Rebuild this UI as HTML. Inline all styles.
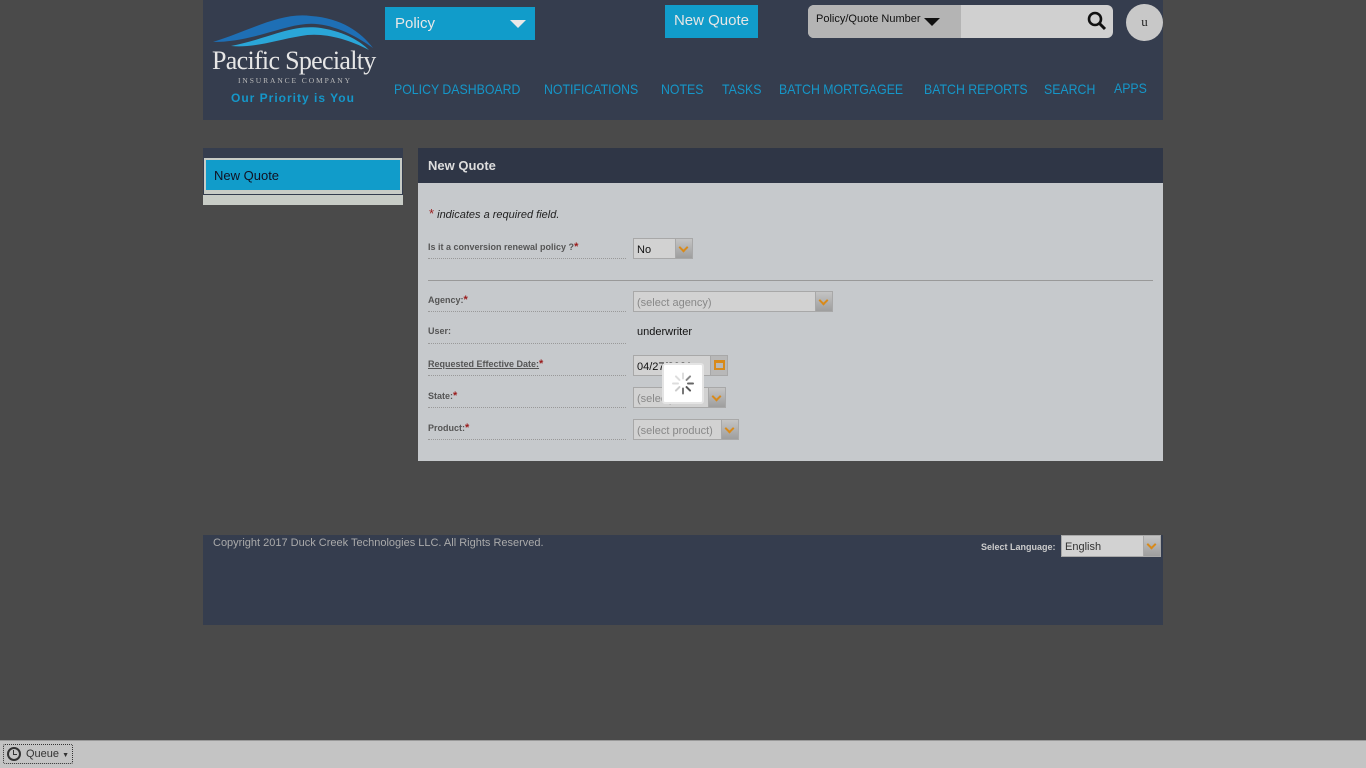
<!DOCTYPE html>
<html><head><meta charset="utf-8"><style>
*{box-sizing:border-box;margin:0;padding:0}
body{width:1366px;height:768px;background:#4a4a4a;font-family:"Liberation Sans",sans-serif;position:relative;overflow:hidden}
.abs{position:absolute}
#hdr{left:203px;top:0;width:960px;height:120px;background:#353d4e}
.nav{position:absolute;top:81px;color:#1597c9;font-size:14px;white-space:nowrap;transform:scaleX(0.88);transform-origin:0 0}
.sel{position:absolute;background:#d2d2d2;border:1px solid #a8a8a8;font-size:11px;color:#888;padding-left:3px;line-height:20px;height:21px}
.sel .b{position:absolute;right:0;top:0;width:17px;height:19px;background:linear-gradient(#c4c4c4,#9e9e9e);border-left:1px solid #a8a8a8}
.sel .b:after{content:"";position:absolute;left:4px;top:5px;width:5px;height:5px;border-right:2px solid #d88a1a;border-bottom:2px solid #d88a1a;transform:rotate(45deg)}
.lbl{position:absolute;left:428px;width:198px;font-size:9px;font-weight:bold;color:#555;border-bottom:1px dotted #999;height:18px}
.lbl i{color:#9a1b1b;font-style:normal;font-size:11px}
</style></head><body>
<div id="hdr" class="abs">
<svg class="abs" style="left:8px;top:12px" width="170" height="40" viewBox="0 0 170 40">
<path d="M2 30 C40 18 70 0 100 4 C130 6 150 20 162 36 C140 20 115 10 95 12 C70 14 40 30 2 30Z" fill="#1e6fb5"/>
<path d="M20 34 C60 26 80 12 110 16 C135 20 150 30 158 38 C135 26 110 20 90 24 C65 28 45 36 20 34Z" fill="#2aa6d8"/>
</svg>
<div class="abs" style="left:9px;top:46px;font-family:'Liberation Serif',serif;font-size:26px;color:#e6e6e6;letter-spacing:-0.7px;white-space:nowrap">Pacific Specialty</div>
<div class="abs" style="left:35px;top:76px;font-family:'Liberation Serif',serif;font-size:7.5px;color:#bbb;letter-spacing:1.9px">INSURANCE COMPANY</div>
<div class="abs" style="left:28px;top:91px;font-size:12px;font-weight:bold;color:#1597c9;letter-spacing:1px">Our Priority is You</div>
<div class="abs" style="left:182px;top:7px;width:150px;height:33px;background:#119cca;color:#e8e8e8;font-size:15px;line-height:33px;padding-left:10px">Policy
<div class="abs" style="left:125px;top:13px;border-left:8px solid transparent;border-right:8px solid transparent;border-top:8px solid #e8e8e8"></div></div>
<div class="abs" style="left:462px;top:5px;width:93px;height:33px;background:#119cca;color:#e6e6e6;font-size:15px;line-height:31px;text-align:center">New Quote</div>
<div class="abs" style="left:605px;top:5px;width:305px;height:33px;background:#d0d0d0;border-radius:6px;overflow:hidden">
<div class="abs" style="left:0;top:0;width:153px;height:33px;background:#b4b4b4;font-size:11px;color:#111;padding:8px 0 0 8px">Policy/Quote Number</div>
<div class="abs" style="left:116px;top:13px;border-left:8px solid transparent;border-right:8px solid transparent;border-top:8px solid #111"></div>
<svg class="abs" style="left:279px;top:6px" width="20" height="20"><circle cx="8" cy="8" r="6" fill="none" stroke="#111" stroke-width="2.6"/><path d="M12.5 12.5L18 18" stroke="#111" stroke-width="3"/></svg>
</div>
<div class="abs" style="left:923px;top:4px;width:37px;height:37px;border-radius:50%;background:#c8c8c8;font-family:'Liberation Serif',serif;font-size:13px;text-align:center;line-height:35px;color:#222">u</div>
<div class="nav" style="left:191px">POLICY DASHBOARD</div>
<div class="nav" style="left:341px">NOTIFICATIONS</div>
<div class="nav" style="left:458px">NOTES</div>
<div class="nav" style="left:519px">TASKS</div>
<div class="nav" style="left:576px">BATCH MORTGAGEE</div>
<div class="nav" style="left:721px">BATCH REPORTS</div>
<div class="nav" style="left:841px">SEARCH</div>
<div class="nav" style="left:911px;top:80px">APPS</div>
</div>
<div class="abs" style="left:203px;top:148px;width:200px;height:57px;background:#353d4e"></div>
<div class="abs" style="left:203px;top:195px;width:200px;height:10px;background:#c8ccc6"></div>
<div class="abs" style="left:204px;top:158px;width:198px;height:36px;background:#c8ccc6;padding:2px"><div style="background:#119cca;height:30px;border:1px solid #119cca;font-size:13px;color:#112;line-height:30px;padding-left:7px">New Quote</div></div>
<div class="abs" style="left:418px;top:148px;width:745px;height:35px;background:#2f3646;color:#ddd;font-weight:bold;font-size:13px;line-height:35px;padding-left:10px">New Quote</div>
<div class="abs" style="left:418px;top:183px;width:745px;height:278px;background:#c6c9cc"></div>
<div class="abs" style="left:429px;top:206px;font-size:11px;font-style:italic;color:#222"><span style="color:#9a1b1b;font-size:13px;font-style:normal">*</span> indicates a required field.</div>
<div class="lbl" style="top:241px">Is it a conversion renewal policy ?<i>*</i></div>
<div class="sel" style="left:633px;top:238px;width:60px;color:#111;line-height:22px">No<div class="b"></div></div>
<div class="abs" style="left:428px;top:280px;width:725px;height:1px;background:#999"></div>
<div class="lbl" style="top:294px">Agency:<i>*</i></div>
<div class="sel" style="left:633px;top:291px;width:200px;line-height:22px">(select agency)<div class="b"></div></div>
<div class="lbl" style="top:326px">User:</div>
<div class="abs" style="left:637px;top:326px;font-size:11px;color:#111">underwriter</div>
<div class="lbl" style="top:358px"><u>Requested Effective Date:</u><i>*</i></div>
<div class="sel" style="left:633px;top:355px;width:78px;color:#111;line-height:22px">04/27/2021</div>
<div class="abs" style="left:710px;top:355px;width:18px;height:21px;background:#b8b8b8;border:1px solid #a8a8a8"><div style="margin:4px 0 0 3px;width:11px;height:10px;border:2px solid #d88a1a;border-top-width:3px"></div></div>
<div class="lbl" style="top:390px">State:<i>*</i></div>
<div class="sel" style="left:633px;top:387px;width:93px;line-height:22px">(select)<div class="b"></div></div>
<div class="lbl" style="top:422px">Product:<i>*</i></div>
<div class="sel" style="left:633px;top:419px;width:106px;line-height:22px">(select product)<div class="b"></div></div>
<div class="abs" style="left:662px;top:363px;width:42px;height:41px;background:#fff;border:2px solid #e4e4e4;border-radius:3px">
<svg width="38" height="37" viewBox="-19 -18.5 38 37"><g stroke-width="2" stroke-linecap="round">
<line x1="0" y1="-5" x2="0" y2="-10" stroke="#ddd"/><line x1="5" y1="0" x2="10" y2="0" stroke="#888" transform="rotate(-45)"/><line x1="5" y1="0" x2="10" y2="0" stroke="#666"/><line x1="5" y1="0" x2="10" y2="0" stroke="#555" transform="rotate(45)"/><line x1="0" y1="5" x2="0" y2="10" stroke="#777"/><line x1="-5" y1="0" x2="-10" y2="0" stroke="#ccc" transform="rotate(-45)"/><line x1="-5" y1="0" x2="-10" y2="0" stroke="#ddd"/><line x1="-5" y1="0" x2="-10" y2="0" stroke="#ddd" transform="rotate(45)"/></g></svg></div>
<div class="abs" style="left:203px;top:535px;width:960px;height:90px;background:#353d4e"></div>
<div class="abs" style="left:213px;top:537px;font-size:11px;color:#aaa">Copyright 2017 Duck Creek Technologies LLC. All Rights Reserved.</div>
<div class="abs" style="left:981px;top:542px;font-size:9px;font-weight:bold;color:#ccc">Select Language:</div>
<div class="sel" style="left:1061px;top:535px;width:100px;height:22px;color:#333;line-height:22px">English<div class="b" style="height:20px"></div></div>
<div class="abs" style="left:0;top:740px;width:1366px;height:28px;background:#c4c4c4;border-top:1px solid #999"></div>
<div class="abs" style="left:3px;top:744px;width:70px;height:20px;border:1px dotted #333;border-radius:2px;font-size:11px;color:#333;line-height:19px;padding-left:22px">Queue <span style="font-size:7px">▼</span>
<div class="abs" style="left:3px;top:2px;width:14px;height:14px;border:2px solid #333;border-radius:50%"><div class="abs" style="left:4px;top:1px;width:4px;height:5px;border-left:1.5px solid #333;border-bottom:1.5px solid #333"></div></div></div>
</body></html>
